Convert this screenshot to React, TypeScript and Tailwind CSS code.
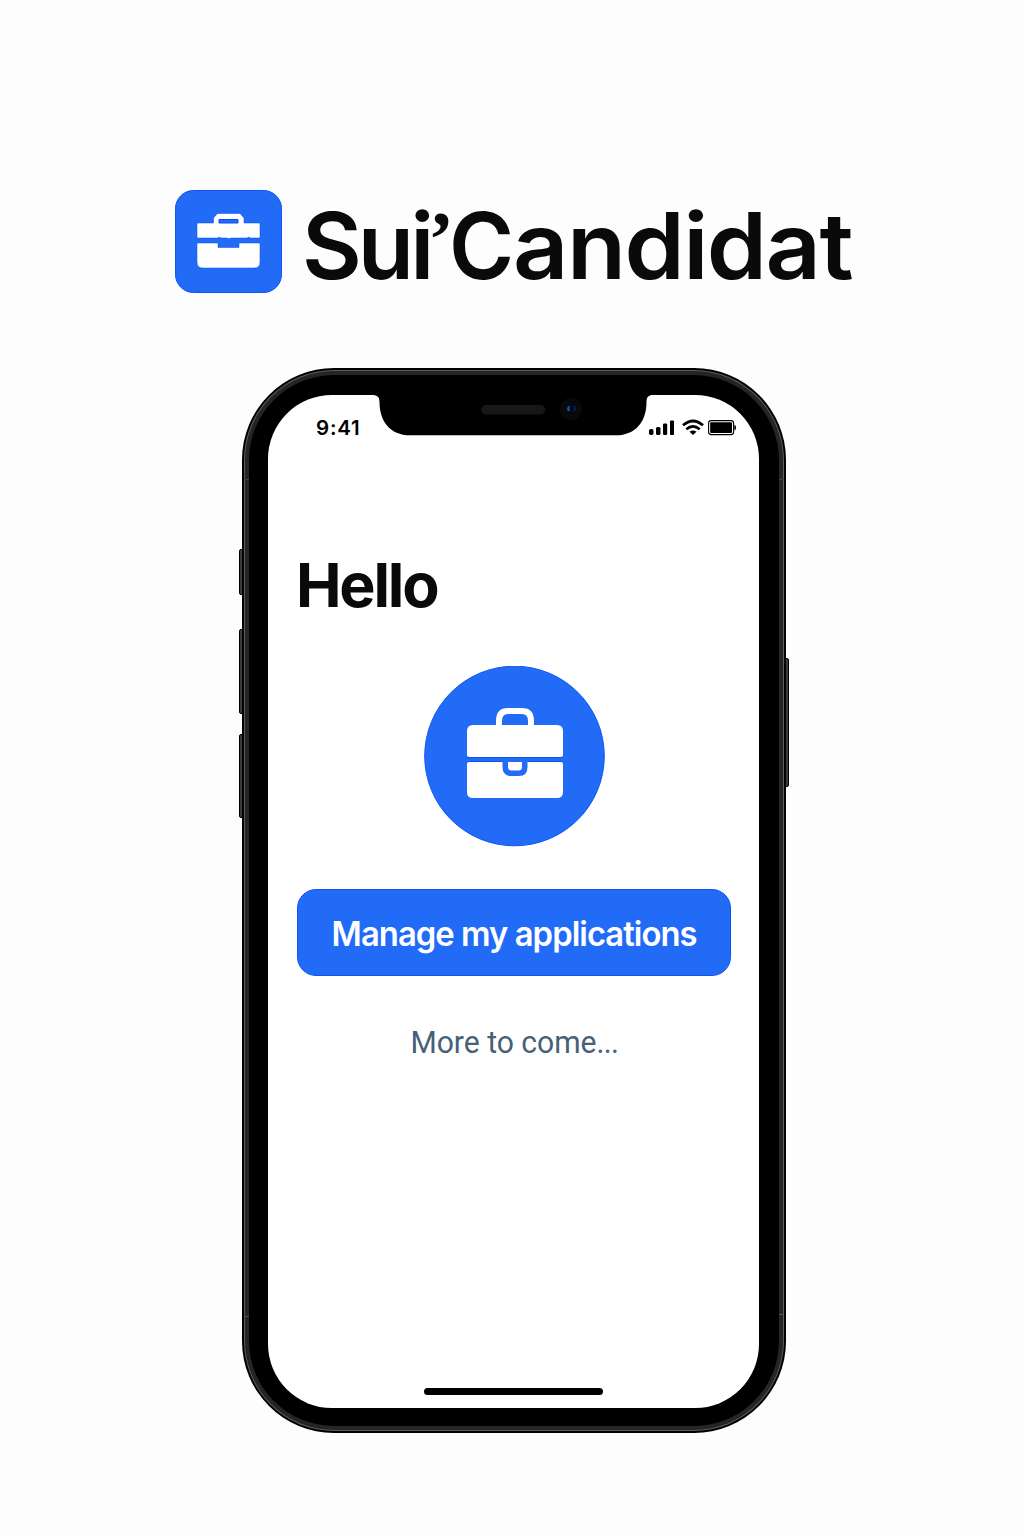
import React from "react";

function LogoBriefcase() {
  return (
    <svg className="block h-[103px] w-[107px]" viewBox="0 0 107 103" fill="none">
      <rect x="0.5" y="0.5" width="106" height="102" rx="18" fill="#216bf6" stroke="#0f55f6" />
      <path
        d="M22 34Q22 33 23 33H38.500V28L42.500 23.500H65L69 28V33H84Q85 33 85 34V46.500Q85 48 84 48H75.500L74 47L72 48H56Q54 49 52 48H46L44 47L42.500 48H23Q22 48 22 46.500Z"
        fill="#fff"
        stroke="#0a4df6"
        strokeWidth="0.5"
      />
      <path d="M44 33V29.500H63V33Z" fill="#216bf6" stroke="#0a4df6" strokeWidth="1" />
      <path
        d="M22 54Q22 53 23 53H43V57.500H64V53H84Q85 53 85 54V72Q85 78 79 78H28Q22 78 22 72Z"
        fill="#fff"
        stroke="#0a4df6"
        strokeWidth="0.5"
      />
    </svg>
  );
}

function HeroBriefcase() {
  return (
    <svg className="block h-[181px] w-[181px]" viewBox="0 0 181 181" fill="none">
      <circle cx="90.500" cy="90" r="89.800" fill="#216bf6" stroke="#0f55f6" />
      <path
        d="M75 60V55Q75 45 84 45H98Q107 45 107 55V60"
        stroke="#fff"
        strokeWidth="6"
      />
      <path
        d="M43 65Q43 59 49 59H133Q139 59 139 65V89Q139 91 137 91H45Q43 91 43 89Z"
        fill="#fff"
      />
      <path
        d="M43 98Q43 96 45 96H78.500V101Q78.500 110 87 110H95Q103.500 110 103.500 101V96H137Q139 96 139 98V126Q139 132 133 132H49Q43 132 43 126Z"
        fill="#fff"
      />
      <path d="M84 96H98V101Q98 104.500 94.500 104.500H87.500Q84 104.500 84 101Z" fill="#fff" />
      <path d="M43.500 91.500H138.500M44 95.500H78M104 95.500H138" stroke="#0a4df6" strokeWidth="0.8" />
    </svg>
  );
}

function StatusIcons() {
  return (
    <svg className="block h-[20px] w-[90px]" viewBox="648 418 90 20" fill="#000">
      <rect x="649" y="429" width="4.500" height="6" rx="1.800" />
      <rect x="656" y="427" width="4.500" height="8" rx="1.500" />
      <rect x="663" y="423.500" width="4.200" height="11.500" rx="1.200" />
      <rect x="670" y="420.500" width="4" height="14.500" rx="1" />
      <path d="M683 425.300Q693 416.600 703 425.300" fill="none" stroke="#000" strokeWidth="2.800" />
      <path d="M686.300 429.200Q693 423.400 699.700 429.200" fill="none" stroke="#000" strokeWidth="2.600" />
      <path d="M689.500 431.800Q693 429 696.500 431.800L693 435Z" />
      <rect x="708.600" y="420.600" width="25" height="14" rx="2.600" fill="none" stroke="#000" strokeWidth="1.100" />
      <rect x="710.200" y="422.200" width="21.800" height="10.800" rx="1" />
      <path d="M734.400 425H735Q736 425.500 736 427.600T735 430.200H734.400Z" />
    </svg>
  );
}

function Notch() {
  return (
    <div className="absolute left-[104px] top-0 h-[41px] w-[281px]">
      <svg className="block h-[41px] w-[281px]" viewBox="372 395 281 41">
        <path
          d="M372 394H653V395C648.500 395 646.500 397 646.500 402C646.500 421 636 435.300 616 435.300H410C390 435.300 379.500 421 379.500 402C379.500 397 377.500 395 372 395Z"
          fill="#000"
        />
        <rect x="481" y="405" width="64.500" height="9.500" rx="4.750" fill="#171717" />
        <circle cx="571" cy="409" r="11" fill="#090909" />
        <circle cx="571.500" cy="408.800" r="5" fill="#05070f" />
        <path d="M570 405.500Q565.800 407 567.500 410.500L570 411.500L569.500 408.500Z" fill="#1657c8" />
        <path d="M573.500 405.800Q577 408 573.500 411.200" fill="none" stroke="#0b2768" strokeWidth="1.300" />
      </svg>
    </div>
  );
}

export default function App() {
  return (
    <main className="flex h-[1536px] w-[1024px] flex-col overflow-hidden bg-[#fdfdfd] font-['Inter',sans-serif] text-[#0a0a0a]">
      <header className="mt-[190px] flex h-[103px] items-center pl-[175px]">
        <LogoBriefcase />
        <h1 className="ml-[20px] mt-[7px] flex h-[103px] items-baseline whitespace-nowrap text-[92px] font-semibold leading-[103px]">
          <span className="w-[126px] tracking-[-4px]">Sui</span>
          <span className="w-[21px]">
            <span className="mb-[14px] inline-block -translate-y-[14px] font-['Liberation_Serif',serif] text-[78px] font-bold leading-[60px]">
              ’
            </span>
          </span>
          <span className="w-[64px]">
            <span className="inline-block origin-left scale-x-[0.96]">C</span>
          </span>
          <span className="inline-block origin-left scale-x-[1.05] tracking-[-1.5px]">andidat</span>
        </h1>
      </header>

      <section className="relative ml-[242px] mt-[75px] h-[1065px] w-[544px] shrink-0">
        <div className="absolute left-[-3px] top-[181px] h-[46px] w-[6px] rounded-l-[2px] border border-black bg-[#3a3a3a]" />
        <div className="absolute left-[-3px] top-[261px] h-[85px] w-[6px] rounded-l-[2px] border border-black bg-[#3a3a3a]" />
        <div className="absolute left-[-3px] top-[366px] h-[84px] w-[6px] rounded-l-[2px] border border-black bg-[#3a3a3a]" />
        <div className="absolute right-[-3px] top-[290px] h-[129px] w-[6px] rounded-r-[2px] border border-black bg-[#3a3a3a]" />

        <div className="relative h-full rounded-[92px] bg-black p-[2px]">
          <div className="h-full rounded-[90px] bg-[#5c5c5c] p-px">
            <div className="h-full rounded-[89px] bg-[#252525] p-[4px]">
              <div className="h-full rounded-[85px] bg-black pb-[18px] pl-[19px] pr-[20.5px] pt-[20px]">
                <div className="relative flex h-full flex-col overflow-hidden rounded-[64px] bg-white">
                  <Notch />
                  <div className="mt-[22px] flex h-[22px] items-center justify-between pl-[48px] pr-[20.5px]">
                    <span className="text-[20.500px] font-semibold leading-[22px] tracking-[0.8px] text-black">9:41</span>
                    <StatusIcons />
                  </div>

                  <h2 className="ml-[28px] mt-[108px] whitespace-nowrap text-[61px] font-bold leading-[76px] tracking-[-2.2px]">
                    Hello
                  </h2>
                  <div className="ml-[156px] mt-[43px]">
                    <HeroBriefcase />
                  </div>
                  <button className="ml-[29px] mt-[42px] flex h-[87px] w-[434px] items-center justify-center whitespace-nowrap rounded-[19px] border border-[#0f55f6] bg-[#216bf6] pt-[2px] text-[34px] font-semibold tracking-[-1px] text-white">
                    <span className="inline-block scale-x-[0.965]">Manage my applications</span>
                  </button>
                  <p className="ml-[2px] mt-[46px] scale-x-[0.94] whitespace-nowrap text-center font-['Roboto',sans-serif] text-[32px] leading-[40px] text-[#466078]">
                    More to come<span className="tracking-[-0.8px]">...</span>
                  </p>
                  <div className="absolute bottom-[13px] left-[156px] h-[7px] w-[179px] rounded-full bg-black" />
                </div>
              </div>
            </div>
          </div>
        </div>

        <div className="absolute left-[2px] top-[111px] h-px w-[5px] bg-[#444]" />
        <div className="absolute right-[2px] top-[111px] h-px w-[5px] bg-[#444]" />
        <div className="absolute left-[2px] top-[948px] h-px w-[5px] bg-[#555]" />
        <div className="absolute right-[2px] top-[946px] h-px w-[5px] bg-[#555]" />
      </section>
    </main>
  );
}
